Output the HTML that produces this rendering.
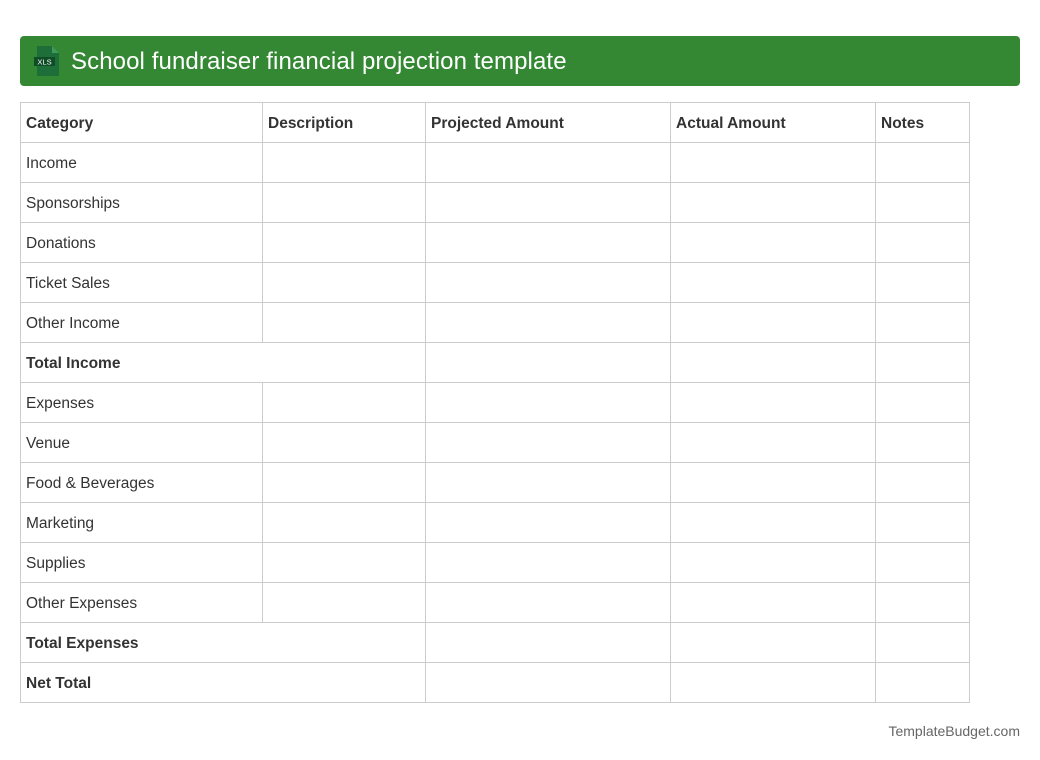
<!DOCTYPE html>
<html><head><style>
body{margin:0;width:1040px;height:760px;background:#fff;font-family:"Liberation Sans",Arial,sans-serif;position:relative}
.hdr{position:absolute;left:20px;top:36px;width:1000px;height:50px;background:#348834;border-radius:4px}
.hdr .t{position:absolute;left:51px;top:11px;font-size:24px;color:#fff;line-height:30px;letter-spacing:0.1px}
table{position:absolute;left:20px;top:102px;border-collapse:collapse;table-layout:fixed;width:949px}
td{border:1px solid #ccc;height:39px;padding:2px 0 0 5px;font-size:15.5px;color:#333;box-sizing:border-box}
tr{height:40px}
.b{font-weight:bold}
.f{position:absolute;right:20px;top:723px;font-size:14px;color:#666}
</style></head><body>
<div class="hdr">
<svg style="position:absolute;left:14px;top:10px" width="26" height="31" viewBox="0 0 26 31">
<path d="M3 0H18L25 7V30H3Z" fill="#1e6e3a"/><path d="M18 0V7H25Z" fill="#3e9a5c"/>
<rect x="0" y="11" width="21" height="9" fill="#0f4d27"/>
<text x="10.5" y="18.5" font-size="7.5" fill="#fff" text-anchor="middle" font-family="Liberation Sans">XLS</text>
</svg>
<div class="t">School fundraiser financial projection template</div></div>
<table>
<colgroup><col style="width:242px"><col style="width:163px"><col style="width:245px"><col style="width:205px"><col style="width:94px"></colgroup>
<tr class="b"><td>Category</td><td>Description</td><td>Projected Amount</td><td>Actual Amount</td><td>Notes</td></tr>
<tr><td>Income</td><td></td><td></td><td></td><td></td></tr>
<tr><td>Sponsorships</td><td></td><td></td><td></td><td></td></tr>
<tr><td>Donations</td><td></td><td></td><td></td><td></td></tr>
<tr><td>Ticket Sales</td><td></td><td></td><td></td><td></td></tr>
<tr><td>Other Income</td><td></td><td></td><td></td><td></td></tr>
<tr><td colspan="2" class="b">Total Income</td><td></td><td></td><td></td></tr>
<tr><td>Expenses</td><td></td><td></td><td></td><td></td></tr>
<tr><td>Venue</td><td></td><td></td><td></td><td></td></tr>
<tr><td>Food &amp; Beverages</td><td></td><td></td><td></td><td></td></tr>
<tr><td>Marketing</td><td></td><td></td><td></td><td></td></tr>
<tr><td>Supplies</td><td></td><td></td><td></td><td></td></tr>
<tr><td>Other Expenses</td><td></td><td></td><td></td><td></td></tr>
<tr><td colspan="2" class="b">Total Expenses</td><td></td><td></td><td></td></tr>
<tr><td colspan="2" class="b">Net Total</td><td></td><td></td><td></td></tr>
</table>
<div class="f">TemplateBudget.com</div>
</body></html>
